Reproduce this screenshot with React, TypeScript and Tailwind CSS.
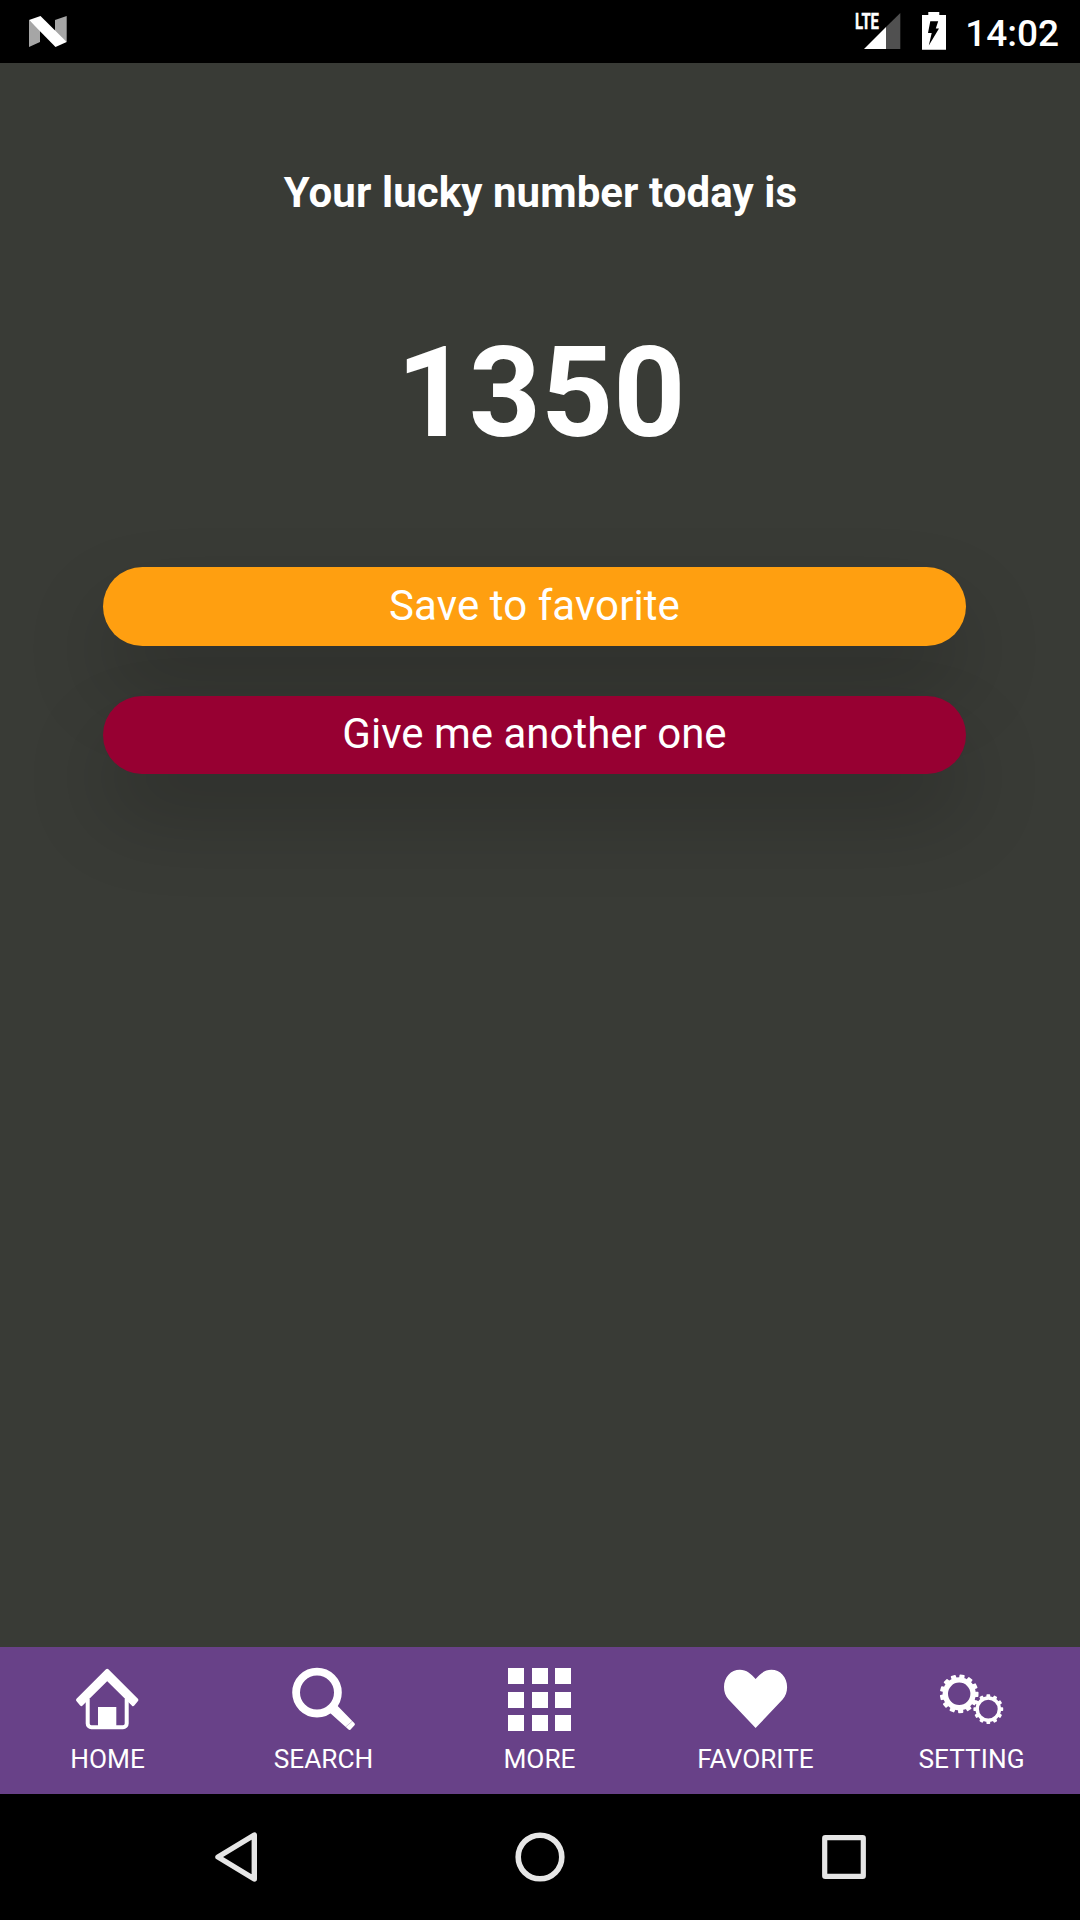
import type { ReactNode } from "react";

type Tab = {
  label: string;
  icon: ReactNode;
};

type GearProps = {
  cx: number;
  cy: number;
  hole: number;
  root: number;
  outer: number;
  teeth: number;
  toothWidth: number;
  offset: number;
};

function Gear({ cx, cy, hole, root, outer, teeth, toothWidth, offset }: GearProps) {
  return (
    <g transform={`translate(${cx} ${cy})`}>
      <circle
        r={(hole + root) / 2}
        fill="none"
        stroke="currentColor"
        strokeWidth={root - hole}
      />
      {Array.from({ length: teeth }, (_, i) => (
        <rect
          key={i}
          x={-toothWidth / 2}
          y={-outer}
          width={toothWidth}
          height={outer - root + 1}
          rx={0.8}
          transform={`rotate(${offset + (i * 360) / teeth})`}
          fill="currentColor"
        />
      ))}
    </g>
  );
}

function HomeIcon() {
  return (
    <svg width="63" height="63" viewBox="0 0 63 63" className="overflow-visible">
      <path
        d="M31.2 2.5 60.7 32 57 36.4 31.2 10.8 5.4 36.4 1.7 32Z"
        fill="currentColor"
        stroke="currentColor"
        strokeWidth="3.4"
        strokeLinejoin="round"
      />
      <path
        d="M11.7 31V55.5a3.7 3.7 0 0 0 3.7 3.7H47a3.7 3.7 0 0 0 3.7-3.7V31"
        fill="none"
        stroke="currentColor"
        strokeWidth="4"
      />
      <rect x="22" y="39" width="18.3" height="22" fill="currentColor" />
    </svg>
  );
}

function SearchIcon() {
  return (
    <svg width="63" height="63" viewBox="0 0 63 63" className="overflow-visible">
      <circle cx="25" cy="24.6" r="20.9" fill="none" stroke="currentColor" strokeWidth="7.8" />
      <path
        d="M38 42.8 43.4 37.8 61.4 56.2 57.5 60.5Z"
        fill="currentColor"
        stroke="currentColor"
        strokeWidth="3"
        strokeLinejoin="round"
      />
      <path d="M53.4 59.2 60.4 53" stroke="#684188" strokeWidth=".6" opacity=".5" />
    </svg>
  );
}

function GridIcon() {
  return (
    <div className="grid size-[63px] grid-cols-[repeat(3,16px)] grid-rows-[repeat(3,16px)] content-between justify-between">
      {Array.from({ length: 9 }, (_, i) => (
        <span key={i} className="bg-white" />
      ))}
    </div>
  );
}

function HeartIcon() {
  return (
    <svg width="63" height="63" viewBox="0 0 63 63" className="overflow-visible">
      <path
        d="M31.6 60 4.6 31.5C1.4 28 0 23.8 0 19 0 9 6.9 1.7 15.9 1.7 22.4 1.7 27.4 6 31.6 11 35.8 6 40.8 1.7 47.3 1.7 56.3 1.7 63.1 9 63.1 19 63.1 23.8 61.7 28 58.6 31.5Z"
        fill="currentColor"
      />
    </svg>
  );
}

function SettingIcon() {
  return (
    <svg width="63" height="63" viewBox="0 0 63 63" className="overflow-visible">
      <Gear cx={19.2} cy={25.8} hole={11.2} root={16.6} outer={19.3} teeth={13} toothWidth={5.2} offset={9} />
      <Gear cx={48.3} cy={41.1} hole={9.4} root={12.8} outer={14.9} teeth={12} toothWidth={3.8} offset={0} />
    </svg>
  );
}

const tabs: Tab[] = [
  { label: "HOME", icon: <HomeIcon /> },
  { label: "SEARCH", icon: <SearchIcon /> },
  { label: "MORE", icon: <GridIcon /> },
  { label: "FAVORITE", icon: <HeartIcon /> },
  { label: "SETTING", icon: <SettingIcon /> },
];

function StatusBar() {
  return (
    <header className="flex h-[63px] shrink-0 items-start justify-between bg-black pr-[21px] pl-[29px]">
      <svg width="38" height="31" viewBox="0 0 38 31" className="mt-4">
        <path d="M0 4 11 14V26L0 31ZM26 4 37.7 0V26L26 18Z" fill="#a6a6a6" />
        <path d="M0 4 11.5 0 37.7 26 26.5 31Z" fill="#fff" />
      </svg>

      <div className="flex items-start">
        <svg width="46" height="40" viewBox="0 -3 46 40" className="mt-[10px] overflow-visible">
          <path d="M9 36 31 14V36Z" fill="#fff" />
          <path d="M31 14 45.3 0V36H31Z" fill="#505050" />
          <text
            x="0"
            y="16.4"
            textLength="24"
            lengthAdjust="spacingAndGlyphs"
            fill="#fff"
            stroke="#fff"
            strokeWidth=".4"
            fontFamily="Roboto, sans-serif"
            fontSize="22"
            fontWeight="700"
          >
            LTE
          </text>
        </svg>
        <svg width="24" height="38" viewBox="0 0 24 38" className="mt-3 ml-[21px]">
          <path d="M6.3 0H17.3V3H24V37.7H0V3H6.3Z" fill="#fff" />
          <path d="M8.3 9.3H16.2L13.8 16.6H17L6.8 33.5 9.7 21H6Z" fill="#000" />
        </svg>
        <span className="ml-[19px] text-[37px] leading-[68px] font-medium">14:02</span>
      </div>
    </header>
  );
}

function SystemNav() {
  return (
    <div className="flex h-[126px] shrink-0 items-center justify-between bg-black pr-[214px] pl-[214px]">
      <svg width="44" height="50" viewBox="0 0 44 50" fill="none" stroke="#e6e6e6">
        <path d="M40.3 3V47L4 25Z" strokeWidth="5.4" strokeLinejoin="round" />
      </svg>
      <svg width="50" height="50" viewBox="0 0 50 50" fill="none" stroke="#e6e6e6">
        <circle cx="25" cy="25" r="21.8" strokeWidth="5.6" />
      </svg>
      <svg width="44" height="44" viewBox="0 0 44 44" fill="none" stroke="#e6e6e6">
        <rect x="2.7" y="2.7" width="38.6" height="38.6" rx=".6" strokeWidth="5.2" strokeLinejoin="round" />
      </svg>
    </div>
  );
}

export default function App() {
  return (
    <div className="flex h-[1920px] w-[1080px] flex-col overflow-hidden bg-[#393b36] font-['Roboto',sans-serif] text-white">
      <StatusBar />

      <main className="flex flex-1 flex-col">
        <h1 className="mt-[105px] pl-px text-center text-[42px] leading-[50px] font-bold tracking-[0.08px]">
          Your lucky number today is
        </h1>
        <p className="mt-[101px] pl-0.5 text-center text-[126px] leading-[148px] font-bold">1350</p>

        <div className="mt-[100px] ml-[103px] flex w-[863px] flex-col gap-[50px]">
          <button
            type="button"
            className="h-[79px] rounded-full bg-[#ff9f10] pb-[2px] text-[42px] leading-none tracking-[0.08px] shadow-[0_42px_84px_rgba(0,0,0,0.2)]"
          >
            Save to favorite
          </button>
          <button
            type="button"
            className="h-[78px] rounded-full bg-[#970032] pb-[3px] text-[42px] leading-none shadow-[0_42px_84px_rgba(0,0,0,0.2)]"
          >
            Give me another one
          </button>
        </div>
      </main>

      <nav className="grid h-[147px] shrink-0 grid-cols-5 bg-[#684188]">
        {tabs.map((tab) => (
          <div key={tab.label} className="flex flex-col items-center pt-[21px] pr-px">
            {tab.icon}
            <span className="mt-3 text-[26.25px] leading-8">{tab.label}</span>
          </div>
        ))}
      </nav>

      <SystemNav />
    </div>
  );
}
